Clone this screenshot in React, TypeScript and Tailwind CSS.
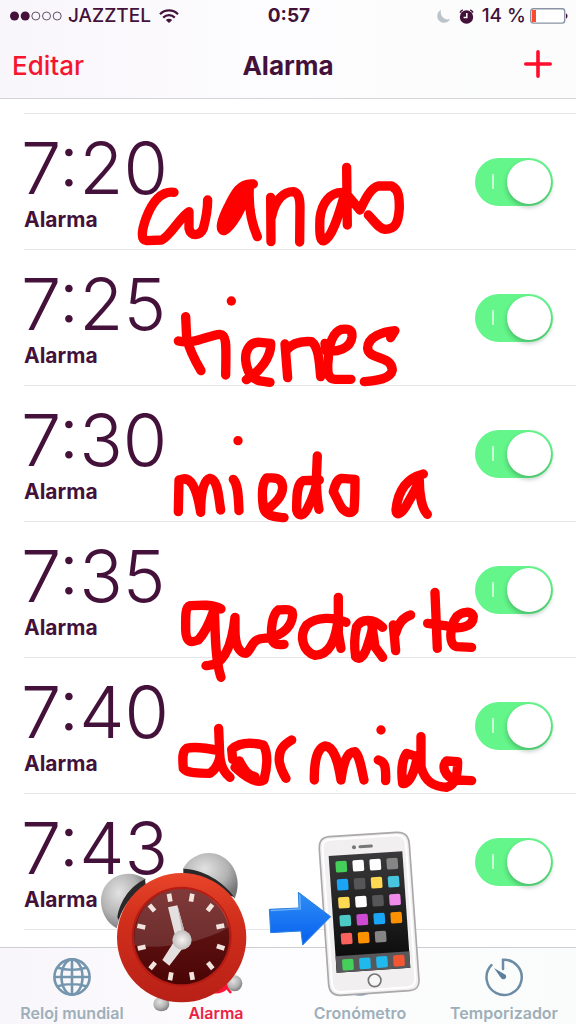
import React from 'react'

const alarms = ['7:20', '7:25', '7:30', '7:35', '7:40', '7:43']

const StatusBar = () => {
  return (
    <div className="grid h-8 grid-cols-[1fr_auto_1fr] items-center pr-2 pl-[10px] text-[19px] font-medium">
      <div className="flex items-center gap-[6px]">
        <svg width="52" height="10" viewBox="0 0 52 10">
          <circle cx="4.5" cy="5" r="4.5" fill="#43113a" />
          <circle cx="15.2" cy="5" r="4.5" fill="#43113a" />
          <g fill="none" stroke="#5d5069">
            <circle cx="25.8" cy="5" r="4" />
            <circle cx="36.5" cy="5" r="4" />
            <circle cx="47.2" cy="5" r="4" />
          </g>
        </svg>
        <span>JAZZTEL</span>
        <svg
          className="ml-[2px]"
          width="20"
          height="15"
          viewBox="0 0 20 15"
          fill="none"
          stroke="#43113a"
          strokeWidth="2.2"
        >
          <path d="M1 5.2C6 .2 14 .2 19 5.2" />
          <path d="M4.2 8.6C7.4 5.4 12.6 5.4 15.8 8.6" />
          <path d="M10 14L6.8 11C8.6 9.4 11.4 9.4 13.2 11Z" fill="#43113a" stroke="none" />
        </svg>
      </div>
      <span className="font-bold">0:57</span>
      <div className="flex items-center justify-end gap-1">
        <svg width="15" height="15" viewBox="0 0 15 15">
          <path d="M5 .8C.6 3 .2 9 3.4 12C6.8 15.2 12.4 14 14.2 10C9 11.8 3.4 7.6 5 .8Z" fill="#bcc4ca" />
        </svg>
        <svg className="mx-1" width="15" height="15" viewBox="0 0 15 15">
          <circle cx="7.5" cy="8" r="6.7" fill="#43113a" />
          <path
            d="M1 3.6C1.6 2.2 2.4 1.4 3.8 .8M14 3.6C13.4 2.2 12.6 1.4 11.2 .8"
            fill="none"
            stroke="#43113a"
            strokeWidth="1.4"
          />
          <path d="M7.8 4V8.4H4.6" fill="none" stroke="#fff" strokeWidth="1.5" />
        </svg>
        <span>14 %</span>
        <svg width="38" height="16" viewBox="0 0 38 16">
          <rect x=".7" y=".7" width="34" height="14.4" rx="2.5" fill="#fff" stroke="#8b93a3" strokeWidth="1.4" />
          <rect x="2" y="2" width="4" height="12" fill="#ff4a31" />
          <path d="M36 5.5C38 6 38 10 36 10.5Z" fill="#43113a" />
        </svg>
      </div>
    </div>
  )
}

const Header = () => {
  return (
    <header className="h-[99px] border-b border-[#d5d3d8] bg-linear-to-r from-[#f8f6fa] via-[#fdfcfe] to-[#fbfcfb]">
      <StatusBar />
      <div className="grid h-[66px] grid-cols-[1fr_auto_1fr] items-center px-3 text-[26px]">
        <button className="justify-self-start font-medium text-[#f5152f]">Editar</button>
        <h1 className="font-bold">Alarma</h1>
        <button className="mr-3 justify-self-end" aria-label="Añadir alarma">
          <svg
            width="28"
            height="30"
            viewBox="0 0 28 30"
            fill="none"
            stroke="#ff0d2b"
            strokeWidth="3.6"
            strokeLinecap="round"
          >
            <path d="M14 1.8V26.2M1.8 14H26.2" />
          </svg>
        </button>
      </div>
    </header>
  )
}

const Alarm = ({ time }: { time: string }) => {
  return (
    <li className="flex h-[136px] items-center justify-between border-b border-[#e6e5e8] pr-[23px]">
      <div className="flex flex-col gap-1">
        <span className="-ml-[3px] text-[72px] leading-[72px] font-light">{time}</span>
        <span className="text-[21px] leading-6 font-bold">Alarma</span>
      </div>
      <label className="cursor-pointer">
        <input type="checkbox" defaultChecked aria-label={`Alarma ${time}`} className="peer sr-only" />
        <span className="flex h-12 w-[78px] items-center justify-between rounded-full bg-gray-200 pr-[2px] pl-[17px] peer-checked:bg-[#64f58b]">
          <span className="h-[15px] w-[2px] bg-[#c9fbd5]" />
          <span className="size-11 rounded-full bg-white shadow-[0_3px_5px_rgba(0,60,20,0.3)]" />
        </span>
      </label>
    </li>
  )
}

const GlobeIcon = () => (
  <svg width="40" height="40" viewBox="0 0 40 40" fill="none" stroke="#7396ae" strokeWidth="2.6">
    <circle cx="20" cy="20" r="17.6" />
    <ellipse cx="20" cy="20" rx="10.5" ry="17.6" />
    <path d="M20 2.4V37.6M2.4 20H37.6M5 10.5C14 13.5 26 13.5 35 10.5M5 29.5C14 26.5 26 26.5 35 29.5" />
  </svg>
)

const AlarmIcon = () => (
  <svg width="40" height="40" viewBox="0 0 40 40">
    <circle cx="20" cy="20" r="16.5" fill="#ff1435" />
    <path d="M31 31L35 36M9 31L5 36" stroke="#ff1435" strokeWidth="2.5" />
  </svg>
)

const StopwatchIcon = () => (
  <svg width="40" height="40" viewBox="0 0 40 40" fill="none" stroke="#7396ae" strokeWidth="2.4">
    <circle cx="20" cy="21.5" r="16" />
    <path d="M20 21.5V11M17 3H23" />
  </svg>
)

const TimerIcon = () => (
  <svg width="40" height="40" viewBox="0 0 40 40">
    <path
      d="M19 12V2.8A17.6 17.6 0 1 1 7.4 8.2"
      fill="none"
      stroke="#6c8ca5"
      strokeWidth="2.5"
      strokeLinecap="round"
    />
    <path d="M10 11L21.8 18C23 20.4 21.2 23 18.4 22.2C17 21.4 16 19.4 10 11Z" fill="#5c7f9b" />
  </svg>
)

const tabs = [
  { name: 'Reloj mundial', icon: <GlobeIcon />, color: 'text-[#9eafb9]' },
  { name: 'Alarma', icon: <AlarmIcon />, color: 'text-[#ec1f45]' },
  { name: 'Cronómetro', icon: <StopwatchIcon />, color: 'text-[#9eafb9]' },
  { name: 'Temporizador', icon: <TimerIcon />, color: 'text-[#9eafb9]' },
]

const TabBar = () => {
  return (
    <nav className="grid h-[77px] grid-cols-4 border-t border-[#cfcdd4] bg-linear-to-r from-[#f8f6fa] via-[#fdfcfe] to-[#fafcfb]">
      {tabs.map((tab) => (
        <a
          key={tab.name}
          href="#"
          className={`flex flex-col items-center gap-1 pt-[9px] text-base font-semibold whitespace-nowrap ${tab.color}`}
        >
          {tab.icon}
          <span className="leading-6">{tab.name}</span>
        </a>
      ))}
    </nav>
  )
}

// finger-drawn marker lines, one group per word
const Scribble = () => (
  <g fill="none" stroke="#ff0000" strokeWidth="28" strokeLinecap="round" strokeLinejoin="round">
    <g transform="translate(120 140) scale(.3333)">
      <path d="M162 157C120 152 95 190 78 235C64 275 62 300 80 302L125 300C150 290 185 225 207 215L207 265C212 292 240 288 250 265C258 235 263 205 263 180" />
      <path d="M400 132C360 128 345 160 325 200C305 240 297 268 312 272C335 262 370 200 388 145C385 200 395 250 412 290M322 250L372 155M330 225L365 165" />
      <path d="M452 172L453 305M455 230C465 180 490 155 520 155C535 158 540 175 540 200L539 306" />
      <path d="M680 82L682 255M670 157C630 155 605 190 600 235C598 280 600 305 612 302C640 290 660 210 675 160M682 165L720 210C735 180 750 145 775 138L815 138C838 150 838 175 838 205C835 250 825 268 795 268C775 265 765 245 745 225" />
    </g>
    <g transform="translate(150 280) scale(.3333)">
      <path d="M107 110L110 175C120 215 140 250 153 272M85 183C130 195 175 165 210 163C232 165 228 200 227 285" />
      <path d="M244 63h.1" />
      <path d="M289 299C330 275 365 230 362 190L330 187C300 185 285 210 287 240C290 270 300 295 330 303L360 307" />
      <path d="M405 192L413 293M410 210C430 185 460 183 485 185C505 200 508 240 512 290" />
      <path d="M525 190L528 212C560 217 602 207 606 170C608 145 590 147 575 148C550 155 535 195 535 235C530 280 535 297 555 298L603 298" />
      <path d="M722 173L735 152C700 155 653 170 653 205C655 240 725 225 727 270C722 300 670 302 643 305" />
    </g>
    <g transform="translate(150 420) scale(.3333)">
      <path d="M87 180L85 275M90 180C120 165 140 200 152 277C152 220 160 180 180 175C205 180 205 230 212 270" />
      <path d="M250 178C265 195 265 230 267 272M264 62h.1" />
      <path d="M350 270C375 250 398 230 398 200C395 172 375 172 350 174C335 190 336 230 340 260C345 292 380 290 402 293" />
      <path d="M502 108L499 180C500 220 503 250 507 268M508 180L460 182C440 190 440 230 440 270C445 295 465 285 475 260C490 230 495 215 500 190" />
      <path d="M550 215C555 195 560 178 575 175L615 178C615 220 615 240 612 270C600 285 580 275 570 255Z" />
      <path d="M820 162C780 172 745 200 738 270C738 290 755 282 770 255C790 220 805 195 808 180C808 220 815 265 832 283" />
    </g>
    <g transform="translate(160 570) scale(.3333)">
      <path d="M183 117C160 102 120 105 90 107C75 112 77 140 77 180C78 220 95 218 115 210C140 185 155 140 163 118L166 200C168 250 172 290 183 322" />
      <path d="M138 287C190 290 215 235 225 142L225 180C225 230 240 250 258 250C275 240 275 205 310 205C350 205 395 180 398 135C398 115 375 118 355 120C335 135 333 180 335 205C340 228 360 225 372 223" />
      <path d="M535 82L535 190L543 235M558 157C520 140 470 140 440 165C415 200 430 245 465 256C510 255 525 210 533 160" />
      <path d="M668 172C640 145 605 145 590 170C583 200 583 235 587 260C600 275 615 255 625 220C635 190 640 170 635 160L645 230L668 262" />
      <path d="M700 165L707 242M707 190C715 160 730 142 752 135" />
      <path d="M825 67L832 235M803 160L860 168C900 180 940 170 940 140C935 120 905 125 890 140C868 170 865 225 890 230L935 232" />
    </g>
    <g transform="translate(160 710) scale(.3333)">
      <path d="M176 55L179 130C180 170 195 190 210 202M176 122C130 112 100 110 80 115C65 125 68 150 70 175C80 190 120 190 150 190C165 180 175 165 180 140" />
      <path d="M218 148L215 118C240 95 280 98 310 105C325 130 322 170 312 210C290 225 250 195 225 172M238 153C255 185 265 195 285 200" />
      <path d="M395 90C370 105 355 120 358 155C362 180 372 195 378 205" />
      <path d="M463 210C462 160 470 115 495 108C525 110 535 160 543 210C550 160 560 125 585 125C600 140 605 180 612 210" />
      <path d="M655 150C675 155 678 170 677 212M663 60h.1" />
      <path d="M740 130C725 150 724 190 728 220C750 225 765 180 772 140L740 130M783 80L783 170C795 215 820 230 860 232C885 225 893 200 893 155L860 153C845 165 850 200 890 210L935 212" />
    </g>
  </g>
)

const ticks = [
  [239, 233, -10],
  [305, 233, 10],
  [360, 263, 38],
  [391, 319, 78],
  [392, 382, 108],
  [361, 437, 142],
  [306, 468, 170],
  [242, 469, 190],
  [188, 437, 220],
  [155, 383, 258],
  [154, 320, 282],
  [186, 264, 320],
]

const ClockSticker = () => (
  <g transform="translate(90 820) scale(.3333)">
    <ellipse cx="214" cy="552" rx="24" ry="22" fill="url(#metal)" />
    <ellipse cx="434" cy="490" rx="23" ry="24" fill="url(#metal)" />
    <path d="M80 325C35 300 18 235 48 195C78 155 130 152 168 178C125 215 95 265 80 325Z" fill="url(#metal)" />
    <path d="M82 292C90 240 125 195 165 178L168 200C130 220 100 255 86 300Z" fill="#2b2829" />
    <path d="M278 148C300 105 350 88 390 106C440 130 455 190 434 236C395 185 340 155 278 148Z" fill="url(#metal)" />
    <path d="M280 146C340 148 400 185 432 230L412 226C375 185 330 168 280 160Z" fill="#2b2829" />
    <circle cx="275" cy="353" r="194" fill="url(#rim)" />
    <circle cx="275" cy="350" r="150" fill="#b31c14" />
    <circle cx="275" cy="350" r="143" fill="url(#face)" />
    <path d="M134 376C200 390 340 370 416 322C410 260 350 207 275 207C190 207 125 280 134 376Z" fill="#fff" opacity=".13" />
    {ticks.map(([x, y, angle]) => (
      <rect
        key={`${x}-${y}`}
        x={x - 7}
        y={y - 12}
        width="14"
        height="24"
        fill="#f1e4df"
        transform={`rotate(${angle} ${x} ${y})`}
      />
    ))}
    <path d="M234 262L262 256L288 350L258 358Z" fill="#e4e0df" />
    <path d="M262 256L276 335L288 350Z" fill="#bdb5b4" />
    <path d="M250 368L285 376L238 437L217 420Z" fill="#e4e0df" />
    <circle cx="276" cy="360" r="29" fill="url(#hub)" />
  </g>
)

const apps = [
  ['#43cf59', '#ffffff', '#ffffff', '#858585'],
  ['#1ba5f7', '#565658', '#ffd952', '#48c5de'],
  ['#ffd952', '#ffffff', '#565658', '#f08bea'],
  ['#4bcbc4', '#cd4bd3', '#1ba5f7', '#ff9100'],
  ['#fa625e', '#ff9100', '#858585'],
]

const dock = ['#43cf59', '#1fb9ee', '#1fb9ee', '#f45532']

const PhoneSticker = () => (
  <g transform="translate(250 820) scale(.3333)">
    <path
      d="M238 50L440 37C466 36 476 48 478 72L507 478C508 500 500 510 478 512L272 526C248 527 238 516 236 494L208 88C207 62 216 52 238 50Z"
      fill="#f1eff0"
      stroke="#aaa8aa"
      strokeWidth="5"
    />
    <path
      d="M240 59L438 46C458 45 466 54 468 74L496 474C497 492 490 500 474 502L274 516C256 517 248 509 246 490L218 90C217 68 222 60 240 59Z"
      fill="none"
      stroke="#fff"
      strokeWidth="6"
    />
    <circle cx="312" cy="82" r="6" fill="#777" />
    <path d="M330 80L364 78" stroke="#777" strokeWidth="9" strokeLinecap="round" />
    <path d="M236 108L457 94L481 443L260 458Z" fill="url(#screen)" />
    <path d="M257 409L478 394L481 443L260 458Z" fill="#58585a" />
    {apps.map((row, r) =>
      row.map((color, c) => (
        <rect
          key={`${r}-${c}`}
          x={257 + c * 51 + r * 4}
          y={123 + r * 54 - c * 3}
          width="34"
          height="34"
          rx="5"
          fill={color}
          transform={`rotate(-4 ${274 + c * 51 + r * 4} ${140 + r * 54 - c * 3})`}
        />
      ))
    )}
    {dock.map((color, c) => (
      <rect
        key={c}
        x={277 + c * 51}
        y={417 - c * 4}
        width="34"
        height="34"
        rx="5"
        fill={color}
        transform={`rotate(-4 ${294 + c * 51} ${434 - c * 4})`}
      />
    ))}
    <circle cx="374" cy="481" r="19" fill="#f7f6f6" stroke="#777578" strokeWidth="5" />
  </g>
)

const ArrowSticker = () => (
  <g transform="translate(250 820) scale(.3333)">
    <path
      d="M58 268L147 264L145 217L242 290L158 375L153 333L62 338Z"
      fill="url(#arrow)"
      stroke="#2a80e0"
      strokeWidth="3"
      strokeLinejoin="round"
    />
    <path d="M62 272L151 267L149 224" fill="none" stroke="#6fb4fa" strokeWidth="4" />
  </g>
)

const Drawings = () => {
  return (
    <svg
      className="pointer-events-none absolute inset-x-0 top-0 w-full"
      viewBox="0 0 576 1024"
      role="img"
      aria-label="cuando tienes miedo a quedarte dormide"
    >
      <defs>
        <radialGradient id="metal" cx=".4" cy=".35" r=".7">
          <stop offset="0" stopColor="#e2e2e2" />
          <stop offset=".6" stopColor="#b3b3b4" />
          <stop offset="1" stopColor="#757577" />
        </radialGradient>
        <linearGradient id="rim" x1="0" y1="0" x2="0" y2="1">
          <stop offset="0" stopColor="#e8452a" />
          <stop offset=".35" stopColor="#d22f1c" />
          <stop offset="1" stopColor="#b82016" />
        </linearGradient>
        <linearGradient id="face" x1="0" y1="0" x2="0" y2="1">
          <stop offset="0" stopColor="#6d1d1c" />
          <stop offset="1" stopColor="#4a0404" />
        </linearGradient>
        <radialGradient id="hub">
          <stop offset="0" stopColor="#f5f3f2" />
          <stop offset="1" stopColor="#c2bebd" />
        </radialGradient>
        <linearGradient id="screen" x1="0" y1="0" x2="0" y2="1">
          <stop offset="0" stopColor="#3a3a3c" />
          <stop offset="1" stopColor="#060606" />
        </linearGradient>
        <linearGradient id="arrow" x1="0" y1="0" x2="0" y2="1">
          <stop offset="0" stopColor="#2f8df5" />
          <stop offset="1" stopColor="#0660ee" />
        </linearGradient>
      </defs>
      <Scribble />
      <ClockSticker />
      <PhoneSticker />
      <ArrowSticker />
    </svg>
  )
}

const App = () => {
  return (
    <div className="relative flex min-h-screen flex-col bg-white font-['Inter',sans-serif] text-[#43113a]">
      <Header />
      <main className="flex-1 pt-[14px] pl-6">
        <ul className="border-t border-[#e6e5e8]">
          {alarms.map((time) => (
            <Alarm key={time} time={time} />
          ))}
        </ul>
      </main>
      <TabBar />
      <Drawings />
    </div>
  )
}

export default App
